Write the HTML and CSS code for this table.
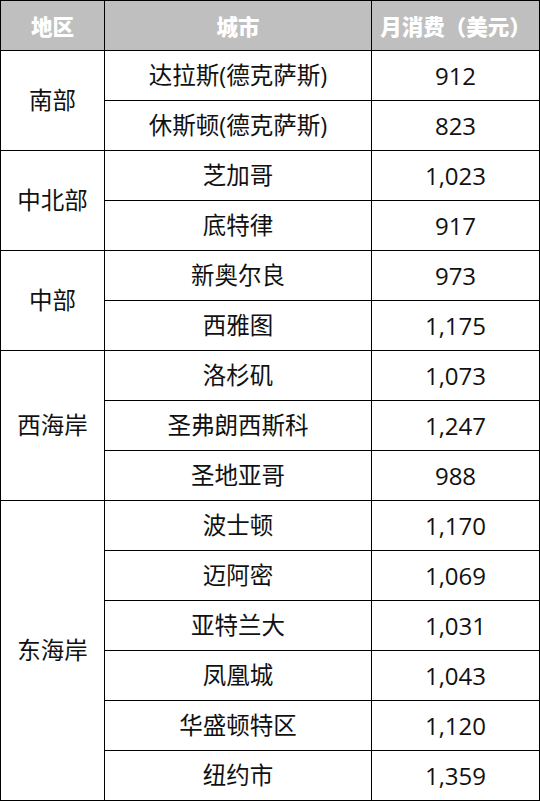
FILE: index.html
```html
<!DOCTYPE html>
<html lang="zh-CN">
<head>
<meta charset="utf-8">
<title>月消费</title>
<link rel="stylesheet" href="styles.css">
</head>
<body>
<table class="data">
  <colgroup>
    <col class="c-region">
    <col class="c-city">
    <col class="c-cost">
  </colgroup>
  <thead>
    <tr><th>地区</th><th>城市</th><th>月消费（美元）</th></tr>
  </thead>
  <tbody>
    <tr><td rowspan="2">南部</td><td>达拉斯(德克萨斯)</td><td class="num">912</td></tr>
    <tr><td>休斯顿(德克萨斯)</td><td class="num">823</td></tr>
    <tr><td rowspan="2">中北部</td><td>芝加哥</td><td class="num">1,023</td></tr>
    <tr><td>底特律</td><td class="num">917</td></tr>
    <tr><td rowspan="2">中部</td><td>新奥尔良</td><td class="num">973</td></tr>
    <tr><td>西雅图</td><td class="num">1,175</td></tr>
    <tr><td rowspan="3">西海岸</td><td>洛杉矶</td><td class="num">1,073</td></tr>
    <tr><td>圣弗朗西斯科</td><td class="num">1,247</td></tr>
    <tr><td>圣地亚哥</td><td class="num">988</td></tr>
    <tr><td rowspan="6">东海岸</td><td>波士顿</td><td class="num">1,170</td></tr>
    <tr><td>迈阿密</td><td class="num">1,069</td></tr>
    <tr><td>亚特兰大</td><td class="num">1,031</td></tr>
    <tr><td>凤凰城</td><td class="num">1,043</td></tr>
    <tr><td>华盛顿特区</td><td class="num">1,120</td></tr>
    <tr><td>纽约市</td><td class="num">1,359</td></tr>
  </tbody>
</table>
</body>
</html>
```

FILE: styles.css
```css
html, body {
  margin: 0;
  padding: 0;
  background: #fff;
}

.data {
  border-collapse: collapse;
  table-layout: fixed;
  width: 539px;
  font-family: "Open Sans", "Noto Sans CJK SC", sans-serif;
  color: #111;
}

.c-region { width: 104px; }
.c-city { width: 267px; }
.c-cost { width: 168px; }

.data th,
.data td {
  border: 1px solid #000;
  padding: 0;
  text-align: center;
  vertical-align: middle;
  height: 50px;
  box-sizing: border-box;
}

.data th {
  background: #bfbfbf;
  color: #fff;
  font-family: "Noto Sans CJK SC", sans-serif;
  font-weight: 900;
  font-size: 21.5px;
  line-height: 1;
}

.data td {
  font-size: 23.5px;
  line-height: 1;
}

.data td.num {
  font-size: 24px;
}
```
